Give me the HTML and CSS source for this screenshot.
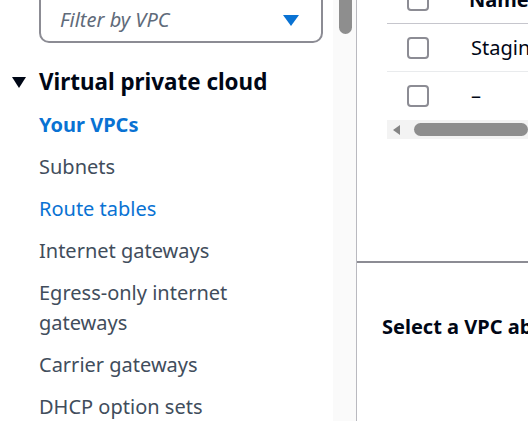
FILE: index.html
```html
<!DOCTYPE html>
<html>
<head>
<meta charset="utf-8">
<link rel="stylesheet" href="styles.css">
</head>
<body>
<div class="app">
  <nav class="sidebar">
    <div class="filter">
      <span class="filter-text">Filter by VPC</span>
      <svg class="caret" width="16" height="11" viewBox="0 0 16 11"><path d="M0 0H16L8 11Z" fill="#0972d3"/></svg>
    </div>
    <div class="section-head">
      <svg class="expand" width="14" height="11" viewBox="0 0 14 11"><path d="M0 0H14L7 11Z" fill="#000716"/></svg>
      <span>Virtual private cloud</span>
    </div>
    <ul class="nav-list">
      <li class="nav-item active">Your VPCs</li>
      <li class="nav-item link">Subnets</li>
      <li class="nav-item visited">Route tables</li>
      <li class="nav-item link">Internet gateways</li>
      <li class="nav-item link">Egress-only internet gateways</li>
      <li class="nav-item link">Carrier gateways</li>
      <li class="nav-item link">DHCP option sets</li>
    </ul>
  </nav>
  <div class="vscroll"><div class="vthumb"></div></div>
  <main class="main">
    <div class="table-panel">
      <div class="row head">
        <span class="checkbox"></span>
        <span class="divider"></span>
        <span class="col-name">Name</span>
      </div>
      <div class="row body-row">
        <span class="checkbox"></span>
        <span class="cell">Staging</span>
      </div>
      <div class="row body-row last">
        <span class="checkbox"></span>
        <span class="cell">–</span>
      </div>
      <div class="hscroll">
        <svg class="harrow" width="7" height="10" viewBox="0 0 7 10"><path d="M7 0V10L0 5Z" fill="#858585"/></svg>
        <div class="hthumb"></div>
      </div>
    </div>
    <div class="details">
      <h2 class="details-title">Select a VPC above</h2>
    </div>
  </main>
</div>
</body>
</html>
```

FILE: styles.css
```css
* { box-sizing: border-box; }
html, body { margin: 0; padding: 0; overflow: hidden; }
body {
  width: 528px;
  height: 421px;
  font-family: "Noto Sans", "Open Sans", sans-serif;
  background: #ffffff;
}
.app {
  display: flex;
  height: 421px;
}
.sidebar {
  width: 333px;
  flex: none;
  background: #ffffff;
  display: flex;
  flex-direction: column;
  overflow: hidden;
}
.sidebar > * { flex-shrink: 0; }
.filter {
  margin: -12px 0 0 39px;
  width: 284px;
  height: 55px;
  border: 2px solid #8c8c94;
  border-radius: 10px;
  display: flex;
  align-items: center;
  justify-content: space-between;
  padding: 9px 22px 0 19px;
}
.filter-text {
  font-style: italic;
  font-size: 20px;
  line-height: 30px;
  color: #5f6b7a;
}
.caret { display: block; }
.section-head {
  margin-top: 24px;
  display: flex;
  align-items: center;
  padding-left: 12px;
  font-weight: 700;
  font-size: 22.4px;
  line-height: 30px;
  color: #000716;
}
.expand { margin-right: 13px; margin-top: 1px; }
.nav-list {
  list-style: none;
  margin: 13px 0 0 0;
  padding: 0 40px 0 39px;
  display: flex;
  flex-direction: column;
  gap: 12px;
}
.nav-item {
  flex-shrink: 0;
  font-size: 20px;
  line-height: 30px;
  color: #414d5c;
}
.nav-item.active { color: #0972d3; font-weight: 700; }
.nav-item.visited { color: #0972d3; }
.vscroll {
  width: 24px;
  flex: none;
  background: #fafafa;
  border-right: 1px solid #b9b9bf;
  padding: 0 5px 0 6px;
}
.vthumb {
  width: 13px;
  height: 46px;
  margin-top: -12px;
  background: #8e8e8e;
  border-radius: 7px;
}
.main {
  flex: 1;
  min-width: 0;
  display: flex;
  flex-direction: column;
  overflow: hidden;
}
.table-panel {
  height: 263px;
  padding-left: 30px;
  border-bottom: 2px solid #8c8c94;
  flex: none;
}
.row {
  display: flex;
  align-items: center;
  padding-left: 20px;
  white-space: nowrap;
  font-size: 20px;
  color: #000716;
}
.row.head {
  margin-top: -23px;
  height: 47px;
  border-bottom: 1px solid #c6c6cd;
}
.row.body-row {
  height: 48px;
  border-bottom: 1px solid #e9ebed;
}
.row.body-row.last { border-bottom: none; height: 48px; }
.checkbox {
  width: 22px;
  height: 22px;
  border: 2px solid #8c8c94;
  border-radius: 4px;
  flex: none;
}
.divider {
  width: 2px;
  height: 30px;
  background: #d1d5db;
  margin-left: 15px;
}
.col-name {
  margin-left: 25px;
  font-weight: 700;
  line-height: 30px;
}
.cell {
  margin-left: 42px;
  line-height: 30px;
}
.hscroll {
  height: 19px;
  background: #f3f3f3;
  display: flex;
  align-items: center;
  padding-left: 6px;
  gap: 14px;
}
.harrow { display: block; }
.hthumb {
  flex: 1;
  height: 13px;
  background: #8e8e8e;
  border-radius: 7px;
}
.details {
  padding: 49px 0 0 25px;
}
.details-title {
  margin: 0;
  font-size: 20px;
  line-height: 30px;
  font-weight: 700;
  color: #000716;
  white-space: nowrap;
}
```
